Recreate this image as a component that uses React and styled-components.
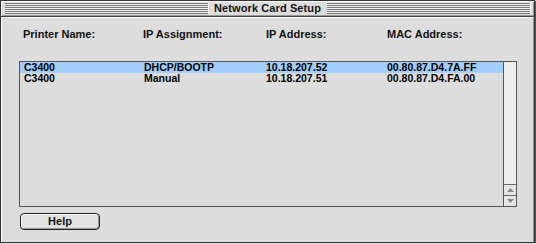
import styled, { createGlobalStyle } from "styled-components";

const rows = [
  { name: "C3400", assign: "DHCP/BOOTP", ip: "10.18.207.52", mac: "00.80.87.D4.7A.FF" },
  { name: "C3400", assign: "Manual", ip: "10.18.207.51", mac: "00.80.87.D4.FA.00" },
];

function App() {
  return (
    <>
      <GlobalStyle />
      <Window>
        <TitleBar>
          <Stripes />
          <Title>Network Card Setup</Title>
          <Stripes />
        </TitleBar>
        <Content>
          <HeaderRow>
            <div>Printer Name:</div>
            <div>IP Assignment:</div>
            <div>IP Address:</div>
            <div>MAC Address:</div>
          </HeaderRow>

          <ListBox>
            <List>
              {rows.map((r, i) => (
                <Row key={i} selected={i === 0}>
                  <div>{r.name}</div>
                  <div>{r.assign}</div>
                  <div>{r.ip}</div>
                  <div>{r.mac}</div>
                </Row>
              ))}
            </List>
            <Scrollbar>
              <Track />
              <Arrow>
                <svg width="7" height="4" viewBox="0 0 7 4">
                  <path d="M3.5 0 L7 4 L0 4 Z" fill="#8a8a8a" />
                </svg>
              </Arrow>
              <Arrow>
                <svg width="7" height="4" viewBox="0 0 7 4">
                  <path d="M0 0 L7 0 L3.5 4 Z" fill="#8a8a8a" />
                </svg>
              </Arrow>
            </Scrollbar>
          </ListBox>

          <Footer>
            <Button>Help</Button>
          </Footer>
        </Content>
      </Window>
    </>
  );
}

const GlobalStyle = createGlobalStyle`
  html, body {
    margin: 0;
    padding: 0;
    background: #dddddd;
  }
  body {
    font-family: "Liberation Sans", Arial, sans-serif;
    color: #000;
  }
`;

const Window = styled.div`
  box-sizing: border-box;
  width: 535px;
  height: 243px;
  display: flex;
  flex-direction: column;
  background: #dddddd;
  border: 1px solid #333;
  box-shadow: 1px 1px 0 #555;
`;

const TitleBar = styled.div`
  height: 15px;
  display: flex;
  align-items: center;
  padding: 0 3px 0 4px;
  background: #dddddd;
  border-bottom: 1px solid #444;
  box-shadow: inset 1px 1px 0 #fff, inset -1px -1px 0 #999;
`;

const Stripes = styled.div`
  flex: 1;
  height: 11px;
  background: repeating-linear-gradient(
    to bottom,
    #777 0px,
    #777 1px,
    #f4f4f4 1px,
    #f4f4f4 2px
  );
  border-right: 1px solid #f4f4f4;
`;

const Title = styled.div`
  padding: 0 6px 0 5px;
  font-size: 11px;
  font-weight: bold;
  line-height: 13px;
  letter-spacing: 0.1px;
  color: #111;
`;

const Content = styled.div`
  flex: 1;
  display: flex;
  flex-direction: column;
  padding: 10px 17px 0 17px;
  border-top: 1px solid #fff;
  border-left: 1px solid #fff;
  border-right: 1px solid #999;
`;

const HeaderRow = styled.div`
  display: grid;
  grid-template-columns: 120px 123px 121px 1fr;
  padding-left: 4px;
  font-size: 11px;
  font-weight: bold;
  line-height: 13px;
  color: #111;
`;

const ListBox = styled.div`
  margin-top: 20px;
  width: 498px;
  height: 146px;
  box-sizing: border-box;
  display: flex;
  border: 1px solid #555;
  background: #dddddd;
`;

const List = styled.div`
  flex: 1;
  display: flex;
  flex-direction: column;
`;

const Row = styled.div`
  display: grid;
  grid-template-columns: 120px 122px 121px 1fr;
  padding-left: 4px;
  height: 11px;
  font-size: 10.5px;
  font-weight: bold;
  line-height: 11px;
  background: ${(props) => (props.selected ? "#a3cdfc" : "transparent")};
`;

const Scrollbar = styled.div`
  width: 12px;
  display: flex;
  flex-direction: column;
  border-left: 1px solid #555;
  background: #eeeeee;
`;

const Track = styled.div`
  flex: 1;
  border-bottom: 1px solid #666;
`;

const Arrow = styled.div`
  height: 10px;
  display: flex;
  align-items: center;
  justify-content: center;
  background: #e6e6e6;
  & + & {
    border-top: 1px solid #666;
  }
`;

const Footer = styled.div`
  display: flex;
  padding: 6px 0 0 1px;
`;

const Button = styled.div`
  box-sizing: border-box;
  width: 80px;
  height: 17px;
  display: flex;
  align-items: center;
  justify-content: center;
  border: 1px solid #222;
  border-radius: 4px;
  background: #e2e2e2;
  box-shadow: inset 1px 1px 0 #fff, inset -1px -1px 0 #999;
  font-size: 11px;
  font-weight: bold;
  line-height: 13px;
  color: #111;
`;

export default App;
